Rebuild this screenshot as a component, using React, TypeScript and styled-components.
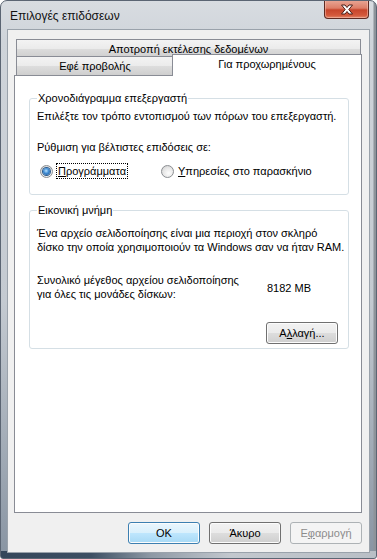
import React from "react";
import styled, { createGlobalStyle } from "styled-components";

const GlobalStyle = createGlobalStyle`
  html, body {
    margin: 0;
    padding: 0;
    background: #ffffff;
  }
  body {
    font-family: "Liberation Sans", Arial, sans-serif;
    font-size: 11px;
    color: #000;
  }
`;

const Window = styled.div`
  width: 377px;
  height: 559px;
  box-sizing: border-box;
  display: flex;
  flex-direction: column;
  border: 1px solid #5b6573;
  border-radius: 7px 7px 3px 3px;
  padding: 0 7px 6px 7px;
  background:
    linear-gradient(to right, #34465a 0, #3d4f63 90px, #8e99a5 150px, #c3c8ce 230px, #b9bfc6 100%) bottom / 100% 7px no-repeat,
    linear-gradient(to left, #8d939a 0, #8d939a 2px, transparent 3px) right / 100% 100% no-repeat,
    linear-gradient(to bottom, #d8dce1 0, #cfd4da 40px, #c4cad1 300px, #8894a2 100%);
  overflow: hidden;
`;

const TitleBar = styled.div`
  height: 29px;
  display: flex;
  align-items: flex-start;
  justify-content: space-between;
`;

const Title = styled.span`
  margin-top: 8px;
  padding-left: 2px;
  font-size: 12px;
  color: #111;
`;

const CloseButton = styled.div`
  width: 45px;
  height: 19px;
  margin-top: -1px;
  box-sizing: border-box;
  border: 1px solid #5e2a22;
  border-top: none;
  border-radius: 0 0 4px 4px;
  display: flex;
  align-items: center;
  justify-content: center;
  background: linear-gradient(to bottom, #e9a897 0, #dd7e68 45%, #c7452c 55%, #d4593c 85%, #e0876a 100%);
  box-shadow: inset 0 0 0 1px rgba(255, 210, 200, 0.45);
`;

const Client = styled.div`
  flex: 1;
  display: flex;
  flex-direction: column;
  background: #f0f0f0;
  padding: 9px 7px 8px 6px;
  box-shadow: 0 0 0 1px #9aa2ab;
`;

const TabControl = styled.div`
  flex: 1;
  display: flex;
  flex-direction: column;
`;

const TabRow = styled.div`
  display: flex;
  align-items: flex-end;
  height: 18px;
  margin: 0 1px 0 2px;
  &:nth-child(2) {
    height: 19px;
    margin-top: -1px;
  }
`;

const Tab = styled.div<{ $width?: number }>`
  ${({ $width }) => ($width ? `width: ${$width}px;` : "flex: 1;")}
  height: 100%;
  box-sizing: border-box;
  border: 1px solid #898c95;
  border-bottom: none;
  display: flex;
  align-items: center;
  justify-content: center;
  background: linear-gradient(to bottom, #f3f3f3 0, #ebebeb 50%, #dddddd 51%, #cfcfcf 100%);
`;

const ActiveTab = styled.div`
  position: relative;
  flex: 1;
  height: 22px;
  margin: 0 -1px -1px -2px;
  box-sizing: border-box;
  border: 1px solid #898c95;
  border-bottom: none;
  background: #ffffff;
  display: flex;
  align-items: flex-start;
  justify-content: center;
  padding-top: 3px;
`;

const Panel = styled.div`
  flex: 1;
  box-sizing: border-box;
  border: 1px solid #898c95;
  background: #ffffff;
  padding: 15px 12px 0 14px;
  display: flex;
  flex-direction: column;
`;

const Group = styled.fieldset<{ $bottom: number }>`
  margin: 0;
  min-width: 0;
  border: 1px solid #d5dfe5;
  border-radius: 3px;
  padding: 1px 10px ${({ $bottom }) => $bottom}px 7px;
  & + & {
    margin-top: 8px;
  }
`;

const Legend = styled.legend`
  padding: 0 1px;
  line-height: 15px;
`;

const Text = styled.div<{ $gap?: number }>`
  line-height: 15px;
  white-space: nowrap;
  margin-top: ${({ $gap }) => $gap ?? 0}px;
`;

const Para = styled.div<{ $gap?: number }>`
  line-height: 14px;
  white-space: nowrap;
  margin-top: ${({ $gap }) => $gap ?? 0}px;
`;

const RadioRow = styled.div`
  display: flex;
  align-items: center;
  height: 16px;
  margin-top: 8px;
  margin-left: 3px;
`;

const RadioOption = styled.label<{ $width?: number }>`
  display: flex;
  align-items: center;
  gap: 4px;
  ${({ $width }) => ($width ? `width: ${$width}px;` : "")}
`;

const RadioCircle = styled.span<{ $checked?: boolean }>`
  width: 13px;
  height: 13px;
  box-sizing: border-box;
  border-radius: 50%;
  border: 1px solid #8b8e92;
  display: flex;
  align-items: center;
  justify-content: center;
  background: radial-gradient(circle at 60% 65%, #fdfdfd 0, #e6e6e6 55%, #c9c9c9 100%);
  &::after {
    content: "";
    display: ${({ $checked }) => ($checked ? "block" : "none")};
    width: 7px;
    height: 7px;
    border-radius: 50%;
    background: radial-gradient(circle at 45% 40%, #b9e3ff 0, #3f8bd3 45%, #1b4f8c 100%);
    box-shadow: 0 0 0 1px #2a5b8e;
  }
`;

const Focused = styled.span`
  outline: 1px dotted #000;
  outline-offset: 0;
  padding: 0 1px;
  line-height: 14px;
`;

const SizeRow = styled.div`
  display: flex;
  align-items: center;
  margin-top: 19px;
`;

const SizeLabel = styled.div`
  width: 230px;
  line-height: 14px;
  white-space: nowrap;
`;

const SizeValue = styled.div`
  padding-top: 1px;
`;

const ButtonLine = styled.div<{ $gap?: number }>`
  display: flex;
  justify-content: flex-end;
  gap: 9px;
  margin-top: ${({ $gap }) => $gap ?? 0}px;
`;

const Button = styled.div<{ $default?: boolean; $disabled?: boolean }>`
  width: 72px;
  height: 22px;
  box-sizing: border-box;
  border-radius: 3px;
  display: flex;
  align-items: center;
  justify-content: center;
  border: 1px solid ${({ $default, $disabled }) => ($disabled ? "#adb2b5" : $default ? "#3c7fb1" : "#707070")};
  color: ${({ $disabled }) => ($disabled ? "#8c8c8c" : "#000")};
  background: ${({ $default, $disabled }) =>
    $disabled
      ? "#f4f4f4"
      : $default
        ? "linear-gradient(to bottom, #eaf6fd 0, #d9f0fc 50%, #bee6fd 51%, #a7d9f5 100%)"
        : "linear-gradient(to bottom, #f2f2f2 0, #ebebeb 50%, #dddddd 51%, #cfcfcf 100%)"};
  box-shadow: inset 0 0 0 1px ${({ $disabled }) => ($disabled ? "#f4f4f4" : "#fcfcfc")};
`;

const U = styled.span`
  text-decoration: underline;
`;

function CloseGlyph() {
  return (
    <svg width="14" height="11" viewBox="0 0 14 11">
      <path
        d="M1.5 1 H5 L7 3.5 L9 1 H12.5 L8.8 5.5 L12.5 10 H9 L7 7.5 L5 10 H1.5 L5.2 5.5 Z"
        fill="#ffffff"
        stroke="#4a1d16"
        strokeWidth="1"
        strokeLinejoin="round"
      />
    </svg>
  );
}

export default function App() {
  return (
    <>
      <GlobalStyle />
      <Window>
        <TitleBar>
          <Title>Επιλογές επιδόσεων</Title>
          <CloseButton>
            <CloseGlyph />
          </CloseButton>
        </TitleBar>
        <Client>
          <TabControl>
            <TabRow>
              <Tab>Αποτροπή εκτέλεσης δεδομένων</Tab>
            </TabRow>
            <TabRow>
              <Tab $width={158}>Εφέ προβολής</Tab>
              <ActiveTab>Για προχωρημένους</ActiveTab>
            </TabRow>
            <Panel>
              <Group $bottom={15}>
                <Legend>Χρονοδιάγραμμα επεξεργαστή</Legend>
                <Text $gap={2}>Επιλέξτε τον τρόπο εντοπισμού των πόρων του επεξεργαστή.</Text>
                <Text $gap={16}>Ρύθμιση για βέλτιστες επιδόσεις σε:</Text>
                <RadioRow>
                  <RadioOption $width={121}>
                    <RadioCircle $checked />
                    <Focused>
                      <U>Π</U>ρογράμματα
                    </Focused>
                  </RadioOption>
                  <RadioOption>
                    <RadioCircle />
                    <span>
                      <U>Υ</U>πηρεσίες στο παρασκήνιο
                    </span>
                  </RadioOption>
                </RadioRow>
              </Group>
              <Group $bottom={4}>
                <Legend>Εικονική μνήμη</Legend>
                <Para $gap={7}>
                  Ένα αρχείο σελιδοποίησης είναι μια περιοχή στον σκληρό
                  <br />
                  δίσκο την οποία χρησιμοποιούν τα Windows σαν να ήταν RAM.
                </Para>
                <SizeRow>
                  <SizeLabel>
                    Συνολικό μέγεθος αρχείου σελιδοποίησης
                    <br />
                    για όλες τις μονάδες δίσκων:
                  </SizeLabel>
                  <SizeValue>8182 MB</SizeValue>
                </SizeRow>
                <ButtonLine $gap={21}>
                  <Button>
                    Α<U>λ</U>λαγή...
                  </Button>
                </ButtonLine>
              </Group>
            </Panel>
          </TabControl>
          <ButtonLine $gap={9}>
            <Button $default>OK</Button>
            <Button>Άκυρο</Button>
            <Button $disabled>
              Ε<U>φ</U>αρμογή
            </Button>
          </ButtonLine>
        </Client>
      </Window>
    </>
  );
}
